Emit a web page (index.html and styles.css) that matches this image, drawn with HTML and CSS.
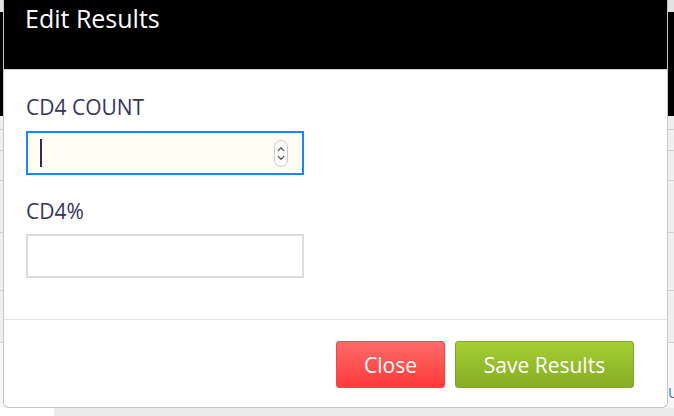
FILE: index.html
```html
<!DOCTYPE html>
<html>
<head>
<meta charset="utf-8">
<title>Edit Results</title>
<link rel="stylesheet" href="styles.css">
</head>
<body>
<div class="page">
  <div class="top-strip"></div>
  <div class="black-band"></div>
  <div class="bg-row h14"></div>
  <div class="bg-row h21"></div>
  <div class="bg-row h30"></div>
  <div class="bg-row h52"></div>
  <div class="bg-row h58"></div>
  <div class="bg-row h52"></div>
  <div class="bg-tail"><a class="bg-link" href="#">Update</a></div>
  <div class="bg-bottom"><div class="bg-bottom-left"></div><div class="bg-bottom-right"></div></div>
</div>

<div class="modal">
  <div class="modal-header">
    <h1 class="modal-title">Edit Results</h1>
  </div>
  <div class="modal-body">
    <label class="field-label">CD4 COUNT</label>
    <div class="input focused">
      <span class="caret"></span>
      <span class="spinner">
        <svg width="14" height="27" viewBox="0 0 14 27">
          <rect x="0.5" y="0.5" width="13" height="26" rx="6.5" ry="6.5" fill="#fdfdfd" stroke="#c9c9c9"/>
          <path d="M4.2 10.6 L7 7.8 L9.8 10.6" fill="none" stroke="#555" stroke-width="1.3" stroke-linecap="round" stroke-linejoin="round"/>
          <path d="M4.2 16.4 L7 19.2 L9.8 16.4" fill="none" stroke="#555" stroke-width="1.3" stroke-linecap="round" stroke-linejoin="round"/>
        </svg>
      </span>
    </div>
    <label class="field-label second">CD4%</label>
    <div class="input plain"></div>
  </div>
  <div class="modal-footer">
    <button class="btn btn-close">Close</button>
    <button class="btn btn-save">Save Results</button>
  </div>
</div>
</body>
</html>
```

FILE: styles.css
```css
html, body {
  margin: 0;
  padding: 0;
}
body {
  width: 674px;
  height: 416px;
  overflow: hidden;
  position: relative;
  background: #ffffff;
  font-family: "Open Sans", "Liberation Sans", sans-serif;
}
.page {
  width: 674px;
}
.top-strip {
  height: 12px;
  background: #e3e3e3;
}
.black-band {
  height: 104px;
  background: #000;
}
.bg-row {
  background: #efefef;
  border-bottom: 1px solid #cfcfcf;
  box-sizing: border-box;
}
.h14 { height: 14px; }
.h21 { height: 21px; }
.h30 { height: 30px; }
.h52 { height: 52px; }
.h58 { height: 58px; }
.bg-tail {
  height: 65px;
  background: #f7f7f7;
  box-sizing: border-box;
  padding: 38px 0 0 668px;
  white-space: nowrap;
  overflow: hidden;
}
.bg-link {
  color: #1a73e8;
  font-size: 14px;
  text-decoration: none;
}
.bg-bottom {
  display: flex;
  height: 8px;
}
.bg-bottom-left {
  width: 54px;
  background: #fff;
}
.bg-bottom-right {
  flex: 1;
  background: #ebebeb;
}

.modal {
  position: absolute;
  top: 0;
  left: 3px;
  width: 665px;
  height: 408px;
  box-sizing: border-box;
  background: #fff;
  border: 1px solid #c6c6c6;
  border-top: none;
  border-radius: 0 0 6px 6px;
  overflow: hidden;
  display: flex;
  flex-direction: column;
}
.modal-header {
  height: 70px;
  box-sizing: border-box;
  background: #000;
  border-bottom: 1px solid #c9ced6;
  padding: 1px 0 0 21px;
}
.modal-title {
  margin: 0;
  color: #fff;
  font-size: 25px;
  font-weight: 400;
  line-height: 35px;
}
.modal-body {
  height: 250px;
  box-sizing: border-box;
  border-bottom: 1px solid #e2e5ea;
  padding: 23px 22px 0 22px;
  display: flex;
  flex-direction: column;
  align-items: flex-start;
}
.field-label {
  display: block;
  font-size: 21px;
  line-height: 28px;
  color: #343462;
  margin-bottom: 10px;
}
.field-label.second {
  margin-top: 22px;
  margin-bottom: 9px;
}
.input {
  width: 278px;
  height: 44px;
  box-sizing: border-box;
  display: flex;
  align-items: center;
  justify-content: space-between;
}
.input.focused {
  background: #fffdf4;
  border: 2px solid #1c84f6;
  padding: 0 14px 0 12px;
}
.input.plain {
  background: #fff;
  border: 2px solid #dcdcdc;
}
.caret {
  width: 2px;
  height: 28px;
  background: #2b2b5c;
}
.spinner {
  display: flex;
  width: 14px;
  height: 27px;
}
.modal-footer {
  flex: 1;
  display: flex;
  justify-content: flex-end;
  align-items: flex-start;
  gap: 10px;
  padding: 21px 33px 0 0;
}
.btn {
  height: 47px;
  box-sizing: border-box;
  padding: 0 27px;
  font-family: "Open Sans", "Liberation Sans", sans-serif;
  font-size: 21px;
  color: #fff;
  border-radius: 3px;
  cursor: pointer;
}
.btn-close {
  width: 109px;
  background: linear-gradient(to bottom, #ff6a6a, #ff3a3a);
  border: 1px solid #f24848;
}
.btn-save {
  width: 179px;
  background: linear-gradient(to bottom, #a5cf31, #87ac27);
  border: 1px solid #80a52a;
}
```
